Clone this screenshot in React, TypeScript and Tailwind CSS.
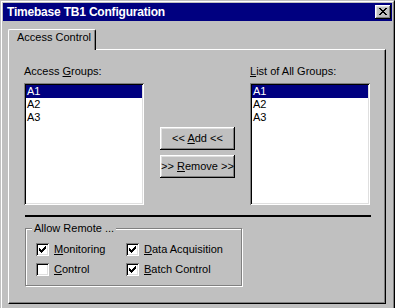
import React from 'react'

const raised =
  'shadow-[inset_-1px_-1px_0_#000,inset_1px_1px_0_#fff,inset_-2px_-2px_0_#808080,inset_2px_2px_0_#dfdfdf]'
const sunken =
  'shadow-[inset_1px_1px_0_#808080,inset_-1px_-1px_0_#fff,inset_2px_2px_0_#000,inset_-2px_-2px_0_#dfdfdf]'

// pixel rows for the little glyphs
const xPixels: [number, number, number][] = [
  [0, 0, 2], [6, 0, 2],
  [1, 1, 2], [5, 1, 2],
  [2, 2, 4],
  [3, 3, 2],
  [2, 4, 4],
  [1, 5, 2], [5, 5, 2],
  [0, 6, 2], [6, 6, 2],
]

const checkPixels: [number, number, number][] = [
  [6, 0, 1],
  [5, 1, 2],
  [0, 2, 1], [4, 2, 3],
  [0, 3, 2], [3, 3, 3],
  [0, 4, 5],
  [1, 5, 3],
  [2, 6, 1],
]

const Pixels = ({ cells, w, h }: { cells: [number, number, number][]; w: number; h: number }) => (
  <svg width={w} height={h} viewBox={`0 0 ${w} ${h}`} shapeRendering="crispEdges">
    {cells.map(([x, y, len], i) => (
      <rect key={i} x={x} y={y} width={len} height={1} fill="#000" />
    ))}
  </svg>
)

const ListBox = ({ items }: { items: string[] }) => (
  <div className={`w-[120px] h-[122px] bg-white p-[2px] ${sunken}`}>
    {items.map((item, i) => (
      <div
        key={item}
        className={`h-[13px] leading-[13px] pl-[1px] ${i === 0 ? 'bg-[#000080] text-white' : 'text-black'}`}
      >
        {item}
      </div>
    ))}
  </div>
)

const Button = ({ children }: { children: React.ReactNode }) => (
  <div className={`w-[75px] h-[23px] flex items-center justify-center leading-[13px] ${raised}`}>
    <span className="whitespace-pre">{children}</span>
  </div>
)

const Check = ({ checked, children }: { checked: boolean; children: React.ReactNode }) => (
  <div className="flex items-center h-[13px]">
    <div className={`w-[13px] h-[13px] bg-white flex items-center justify-center ${sunken}`}>
      {checked && <Pixels cells={checkPixels} w={7} h={7} />}
    </div>
    <span className="ml-[5px] leading-[13px] whitespace-nowrap">{children}</span>
  </div>
)

const U = ({ children }: { children: React.ReactNode }) => (
  <span className="underline underline-offset-[1px]">{children}</span>
)

export default function App() {
  const groups = ['A1', 'A2', 'A3']

  return (
    <div className="w-[395px] h-[308px] overflow-hidden bg-[#c0c0c0] font-['Liberation_Sans',Arial,sans-serif] text-[11px] text-black">
      <div className="h-[314px] border border-[#c0c0c0] border-r-black border-b-black">
        <div className="h-full border border-white border-r-[#808080] border-b-[#808080] p-[1px]">
          {/* title bar */}
          <div className="h-[18px] bg-[#000080] flex items-center justify-between">
            <span className="pl-[4px] text-white font-bold text-[12px] tracking-[-0.2px] leading-[18px]">
              Timebase TB1 Configuration
            </span>
            <div className={`mr-[1px] w-[16px] h-[14px] bg-[#c0c0c0] flex items-center justify-center ${raised}`}>
              <div className="-mt-[1px]">
                <Pixels cells={xPixels} w={8} h={7} />
              </div>
            </div>
          </div>

          {/* tab strip */}
          <div className="mt-[8px] ml-[5px]">
            <div className="relative z-10 -mb-[1px] w-[88px] h-[21px] bg-[#c0c0c0] border-l border-t border-r border-white border-r-black rounded-t-[2px] shadow-[inset_-1px_0_0_#808080] pl-[8px] pt-[1px] leading-[13px]">
              Access Control
            </div>

            {/* panel */}
            <div className="w-[378px] h-[255px] border border-white border-r-black border-b-black shadow-[inset_-1px_-1px_0_#808080] pl-[15px] pt-[15px]">
              <div className="flex items-start">
                <div className="w-[120px]">
                  <div className="leading-[13px] mb-[5px]">
                    Access <U>G</U>roups:
                  </div>
                  <ListBox items={groups} />
                </div>

                <div className="ml-[16px] mt-[62px] flex flex-col gap-[5px]">
                  <Button>
                    {'<< '}
                    <U>A</U>
                    {'dd <<'}
                  </Button>
                  <Button>
                    {'>> '}
                    <U>R</U>
                    {'emove >>'}
                  </Button>
                </div>

                <div className="ml-[15px] w-[120px]">
                  <div className="leading-[13px] mb-[5px]">
                    <U>L</U>ist of All Groups:
                  </div>
                  <ListBox items={groups} />
                </div>
              </div>

              <div className="mt-[10px] ml-[1px] w-[346px] h-[2px] bg-black" />

              {/* group box */}
              <div className="relative mt-[11px] ml-[1px] w-[217px] h-[58px] border border-[#808080] shadow-[inset_1px_1px_0_#fff,1px_1px_0_#fff] pt-[14px] pl-[10px]">
                <span className="absolute -top-[7px] left-[6px] px-[2px] bg-[#c0c0c0] leading-[13px]">
                  Allow Remote ...
                </span>
                <div className="grid grid-cols-[90px_auto] gap-y-[7px]">
                  <Check checked>
                    <U>M</U>onitoring
                  </Check>
                  <Check checked>
                    <U>D</U>ata Acquisition
                  </Check>
                  <Check checked={false}>
                    <U>C</U>ontrol
                  </Check>
                  <Check checked>
                    <U>B</U>atch Control
                  </Check>
                </div>
              </div>
            </div>
          </div>
        </div>
      </div>
    </div>
  )
}
